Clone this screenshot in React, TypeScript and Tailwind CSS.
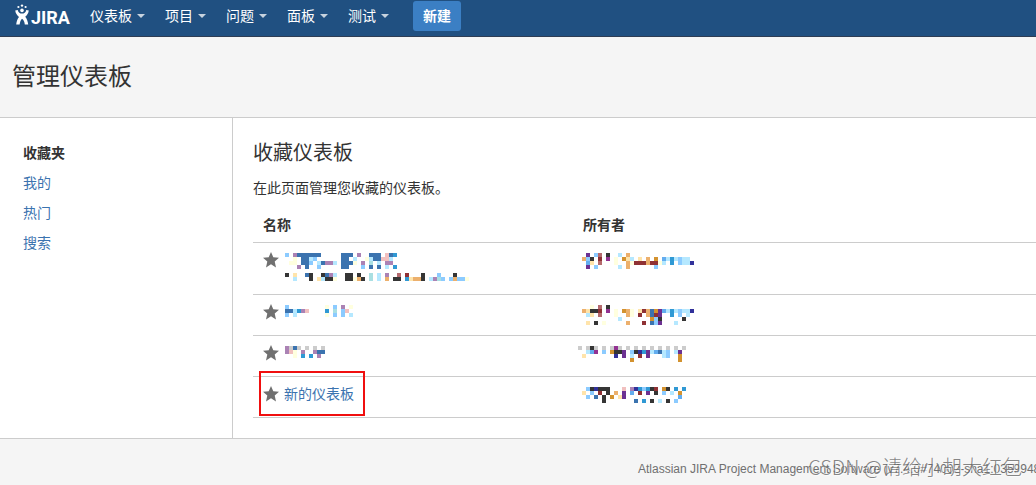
import React from "react";
import clsx from "clsx";

type Dashboard = {
  id: string;
  /** Plain title, or rows of palette keys when the name is masked. */
  title?: string;
  nameMask?: string[];
  ownerMask: string[];
  marked?: boolean;
};

const CELL = 4;

const PALETTE: Record<string, string> = {
  B: "#3b73af",
  b: "#8ccbff",
  c: "#b5e8ff",
  l: "#63adef",
  t: "#3099d4",
  e: "#a9dfe2",
  p: "#ab82b4",
  u: "#6c3192",
  m: "#923292",
  n: "#31319a",
  k: "#353535",
  r: "#8f3134",
  R: "#b56a6e",
  h: "#f1c0bf",
  o: "#ecb06d",
  O: "#d3922f",
  y: "#ffe4ab",
  w: "#ffffdf",
  g: "#cccccc",
};

const MENUS = ["仪表板", "项目", "问题", "面板", "测试"];

const TABS = ["收藏夹", "我的", "热门", "搜索"];

const DASHBOARDS: Dashboard[] = [
  {
    id: "d1",
    nameMask: [
      "b.pBBBBBB.....BBB.p..BBB.hBt",
      "..w.BBcb......BB.c..wcBBhhc",
      ".ww.BBb.cBppc.BBBw.p.e.c.pp.",
      "...p.B..b.....BB...b.B.B.c.t",
      "",
      "k.y..Bk..kBpc..kk.k..e.c.p..R.r...k...b...k",
      "..c...k.yckkw..kkwok.e.c.o.kk.tyook.cpeb.bobbw",
    ],
    ownerMask: [
      "..u.bR.k..c.o",
      ".obk.r.m.w.Oyc.y.o.O.lctcbcc",
      "..ly.R...w..owrrrorrwc.t.bccn",
      "..u.b.....c.o......b",
    ],
  },
  {
    id: "d2",
    nameMask: ["b.........w.b.p.w", "BBctph....t.e.bh.", "b.c.......w.b.b.c"],
    ownerMask: [
      "...w.R.k",
      ".oykkr.m.w.Oow.yroBOulctcbccn",
      "..cy.R...w..ow.r.oBru..t.b.c",
      "..........c.......Obk.....k",
      "..y.k.w.....o...r.Bbu...c",
    ],
  },
  {
    id: "d3",
    nameMask: ["pgBg.g.g.g", "phw.p..pBB", "..w.t.t.p."],
    ownerMask: [
      "g.gkg.g.gmg.g.g.g.g.g.g.g.g",
      "..clm.b.Okku.bkntuclBcb.cu",
      ".y.......n.u.c.r.u...cb..O",
      ".............O...........O",
    ],
  },
  {
    id: "d4",
    title: "新的仪表板",
    marked: true,
    ownerMask: [
      "..bknkkk...h.pntbtkr.Ok.t.t",
      ".y.b.r.k.o.u.l.r.u.k.b.c.O",
      "..b.B.k.O.yu.............l",
      "......k.......B.t.k.c.k.b",
    ],
  },
];

const Mosaic: React.FC<{ rows: string[]; className?: string }> = ({ rows, className }) => {
  const width = Math.max(...rows.map((row) => row.length)) * CELL;

  return (
    <svg
      width={width}
      height={rows.length * CELL}
      shapeRendering="crispEdges"
      className={clsx("block shrink-0", className)}
      aria-hidden="true"
    >
      {rows.flatMap((row, y) =>
        row.split("").map((key, x) =>
          PALETTE[key] ? (
            <rect key={`${x}-${y}`} x={x * CELL} y={y * CELL} width={CELL} height={CELL} fill={PALETTE[key]} />
          ) : null,
        ),
      )}
    </svg>
  );
};

const Star = () => (
  <svg width="16" height="16" viewBox="0 0 16 16" className="block" aria-hidden="true">
    <path
      d="M8 0 10.3 5.2 16 5.7 11.7 9.6 13 15.4 8 12.3 3 15.4 4.3 9.6 0 5.7 5.7 5.2Z"
      fill="#707070"
    />
  </svg>
);

const Logo = () => (
  <svg width="60" height="26" viewBox="0 0 60 26" className="block" role="img" aria-label="JIRA">
    <g fill="#fff">
      <circle cx="4.4" cy="4" r="1.1" />
      <circle cx="8" cy="2.6" r="1.2" />
      <circle cx="11.6" cy="4" r="1.1" />
      <circle cx="8" cy="7.4" r="1.8" />
      <path d="M1.2 7.6 3.7 6.9C4.4 9.4 5.8 10.6 8 10.6s3.6-1.2 4.3-3.7l2.5.7c-.5 3.2-2 4.9-3.6 6.2 1.7 2 2.6 4.4 3 7.8h-3.4c-.2-2.6-1-4.6-2.8-5.8-1.2 1-2 3.1-2.4 5.8H2.2c.4-3.4 1.2-5.7 2.8-7.7C3.2 12.5 1.7 10.8 1.2 7.6Z" />
    </g>
    <text x="17" y="21" fill="#fff" className="font-[Roboto,'Liberation_Sans',sans-serif] text-[18px] font-bold">
      JIRA
    </text>
  </svg>
);

const Caret = () => (
  <svg width="8" height="4" viewBox="0 0 8 4" className="block" aria-hidden="true">
    <path d="M0 0h8L4 4Z" fill="#c7d3df" />
  </svg>
);

const TopBar = () => (
  <header className="flex h-[37px] items-start border-b border-[#2e3d54] bg-[#205081] pt-px pl-3.5 text-white">
    <a href="#home" className="mr-1.5 flex h-[30px] items-center">
      <Logo />
    </a>
    <nav className="flex">
      {MENUS.map((menu) => (
        <button
          key={menu}
          type="button"
          aria-haspopup="menu"
          className="flex h-[30px] items-center gap-[5px] px-2.5 whitespace-nowrap"
        >
          {menu}
          <Caret />
        </button>
      ))}
    </nav>
    <button type="button" className="ml-3.5 h-[30px] rounded-[3px] bg-[#3b7fc4] px-2.5 font-bold">
      新建
    </button>
  </header>
);

const Sidebar = () => (
  <nav className="w-[233px] shrink-0 border-r border-[#ccc] px-[23px] pt-5">
    <ul>
      {TABS.map((tab, i) => (
        <li key={tab} className="leading-[30px]">
          <a href={`#tab-${i}`} className={i === 0 ? "font-bold text-[#333]" : "text-[#3b73af]"}>
            {tab}
          </a>
        </li>
      ))}
    </ul>
  </nav>
);

const DashboardRow: React.FC<{ dashboard: Dashboard }> = ({ dashboard }) => {
  const { id, title, nameMask, ownerMask, marked } = dashboard;

  return (
    <tr className="border-b border-[#ccc] align-top">
      <td className="relative px-2.5 pt-[7px] pb-[13px]">
        <div className="flex min-h-5 items-start gap-[5px]">
          <button type="button" aria-label="取消收藏" className="mt-0.5">
            <Star />
          </button>
          <a href={`#${id}`} className="text-[#3b73af]">
            {title ?? <Mosaic rows={nameMask ?? []} className="mt-[3px] ml-px" />}
          </a>
        </div>
        {marked && (
          <span className="pointer-events-none absolute -top-1.5 left-1.5 h-[45px] w-[106px] border-2 border-[#f00f0f]" />
        )}
      </td>
      <td className="px-2.5 pt-[7px]">
        <Mosaic rows={ownerMask} className="mt-[3px] -ml-[5px]" />
      </td>
    </tr>
  );
};

const Content = () => (
  <main className="min-w-0 flex-1 pt-5 pb-5 pl-5">
    <h2 className="text-xl leading-[30px]">收藏仪表板</h2>
    <p className="mt-2.5 leading-5">在此页面管理您收藏的仪表板。</p>
    <table className="mt-2.5 w-full table-fixed border-collapse">
      <thead>
        <tr className="border-b border-[#ccc] text-left">
          <th className="w-80 px-2.5 pt-[7px] pb-[7px]">名称</th>
          <th className="px-2.5 pt-[7px] pb-[7px]">所有者</th>
        </tr>
      </thead>
      <tbody>
        {DASHBOARDS.map((dashboard) => (
          <DashboardRow key={dashboard.id} dashboard={dashboard} />
        ))}
      </tbody>
    </table>
  </main>
);

const Footer = () => (
  <footer className="relative flex-1 overflow-hidden border-t border-[#ccc] pt-5 pl-[638px] text-xs leading-5 text-[#707070]">
    <p className="whitespace-nowrap">Atlassian JIRA Project Management Software (v7.4.0#74002-sha1:0359948)</p>
    <span className="absolute right-3.5 bottom-1.5 font-['Noto_Sans_CJK_SC',sans-serif] text-xl leading-6 font-light whitespace-nowrap text-[#666]/80 [text-shadow:1px_1px_0_#ffffffb0]">
      CSDN @请给小胡大红包
    </span>
  </footer>
);

export default function App() {
  return (
    <div className="flex min-h-screen flex-col overflow-hidden bg-[#f5f5f5] font-['Liberation_Sans','Noto_Sans_CJK_SC',sans-serif] text-sm leading-5 text-[#333]">
      <TopBar />
      <div className="border-b border-[#ccc] px-3 py-5">
        <h1 className="text-2xl leading-10">管理仪表板</h1>
      </div>
      <div className="flex bg-white">
        <Sidebar />
        <Content />
      </div>
      <Footer />
    </div>
  );
}
